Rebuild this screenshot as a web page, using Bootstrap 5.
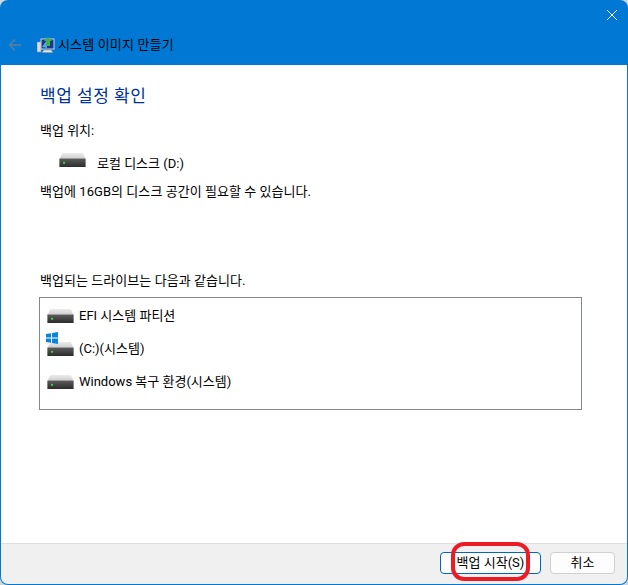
<!DOCTYPE html>
<html lang="ko">
<head>
<meta charset="utf-8">
<title>시스템 이미지 만들기</title>
<link href="https://cdn.jsdelivr.net/npm/bootstrap@5.3.0/dist/css/bootstrap.min.css" rel="stylesheet">
<style>
html,body{margin:0;height:585px;overflow:hidden;background:#cdd6dc}
body{font-family:Roboto,"Noto Sans CJK KR",sans-serif;font-size:13px;line-height:16px;color:#000}
.wiz-window{width:628px;height:585px;background:#0078d4;padding:0 1px 1px 1px;border-radius:8px}
.wiz-top{height:65px;padding-top:38px;padding-left:7px;color:#000}
.wiz-close{top:9px;right:9px}
.wiz-title{font-size:13px;margin-left:3px;letter-spacing:.15px;margin-top:-1px}
.wiz-sysicon{margin-left:15px;margin-top:-1px}
.wiz-main{height:478px;background:#fff;padding:20px 45px 0 39px}
.wiz-heading{font-size:17px;line-height:22px;color:#003399;letter-spacing:.5px;margin:0;font-weight:400}
.wiz-label{margin:16px 0 0 0}
.wiz-dest{margin:13px 0 0 18px;gap:10px}
.wiz-dest span{margin-top:4px}
.wiz-need{margin-top:12px;letter-spacing:.05px}
.wiz-list-title{margin-top:73px;letter-spacing:.05px}
.wiz-box{margin:8px 0 0 -1px;height:113px;border:1px solid #828790;padding:1px 6px;background:#fff}
.wiz-row{height:33px;gap:4px}
.wiz-foot{height:41px;background:#f0f0f0;border-top:1px solid #dfdfdf;padding:8px 12px 0 0;gap:9px;border-radius:0 0 7px 7px}
.wiz-btn{height:22px;padding:0;font-size:13px;line-height:18px;border-radius:4px;background:#fdfdfd;color:#000;border:1px solid #d0d0d0;--bs-btn-hover-bg:#fdfdfd}
.wiz-btn-main{width:101px;border:1px solid #0067c0}
.wiz-btn-sub{width:65px}
.wiz-mark{left:451px;top:542px;width:79px;height:39px;border:4px solid #ed1c24;border-radius:13px;pointer-events:none}
</style>
</head>
<body>
<svg width="0" height="0" class="position-absolute">
<defs>
<linearGradient id="dt" x1="0" y1="0" x2="0" y2="1"><stop offset="0" stop-color="#ececec"/><stop offset="1" stop-color="#c9c9c9"/></linearGradient>
<linearGradient id="df" x1="0" y1="0" x2="0" y2="1"><stop offset="0" stop-color="#5c5c5c"/><stop offset="1" stop-color="#2c2c2c"/></linearGradient>
<symbol id="drive" viewBox="0 0 30 16">
<path d="M4 1h22l3 7H1z" fill="url(#dt)"/>
<rect x="1" y="7" width="28" height="9" fill="url(#df)"/>
<rect x="5" y="10.500" width="2" height="2" fill="#39e23c"/>
</symbol>
</defs>
</svg>
<div class="wiz-window d-flex flex-column position-relative">
<div class="wiz-top d-flex align-items-start position-relative">
<svg class="flex-shrink-0" width="14" height="14" viewBox="0 0 14 14" fill="none" stroke="#5f7f9e" stroke-width="1.300"><path d="M13 7H1.500M7 1.500 1.500 7 7 12.500"/></svg>
<svg class="flex-shrink-0 wiz-sysicon" width="18" height="17" viewBox="0 0 18 17">
<rect x="0" y="5" width="4" height="10" fill="#d9dde0" stroke="#8a9096" stroke-width=".6"/>
<rect x="4" y="2" width="13" height="10" fill="#16398f" stroke="#c9d4dc"/>
<path d="M5 10 10 3v8z" fill="#5ba7e6"/>
<path d="M7 13h7l2 2.500H5z" fill="#dfe3e6" stroke="#8a9096" stroke-width=".5"/>
<path d="M11 0l4 4h-2v5h-4V4H7z" fill="#3fb24a"/>
</svg>
<span class="wiz-title">시스템 이미지 만들기</span>
<svg class="position-absolute wiz-close" width="12" height="12" viewBox="0 0 12 12" stroke="#fff" stroke-width="1"><path d="M1 1l10 10M11 1 1 11"/></svg>
</div>
<div class="wiz-main">
<h1 class="wiz-heading">백업 설정 확인</h1>
<p class="wiz-label">백업 위치:</p>
<div class="wiz-dest d-flex align-items-start">
<svg width="29" height="15"><use href="#drive"/></svg>
<span>로컬 디스크 (D:)</span>
</div>
<p class="wiz-need mb-0">백업에 16GB의 디스크 공간이 필요할 수 있습니다.</p>
<p class="wiz-list-title mb-0">백업되는 드라이브는 다음과 같습니다.</p>
<div class="wiz-box">
<div class="wiz-row d-flex align-items-center">
<svg width="29" height="15"><use href="#drive"/></svg><span>EFI 시스템 파티션</span>
</div>
<div class="wiz-row d-flex align-items-center position-relative">
<svg width="29" height="15"><use href="#drive"/></svg><span>(C:)(시스템)</span>
<svg class="position-absolute top-0 start-0" width="12" height="12" viewBox="0 0 12 12" fill="#0a84d8"><path d="M0 2l5-.8V5.500H0zM6 1.100 12 0v5.500H6zM0 6.500h5v4.300L0 10zM6 6.500h6V12l-6-1z"/></svg>
</div>
<div class="wiz-row d-flex align-items-center">
<svg width="29" height="15"><use href="#drive"/></svg><span>Windows 복구 환경(시스템)</span>
</div>
</div>
</div>
<div class="wiz-foot d-flex justify-content-end align-items-start">
<button type="button" class="btn wiz-btn wiz-btn-main">백업 시작(S)</button>
<button type="button" class="btn wiz-btn wiz-btn-sub">취소</button>
</div>
</div>
<div class="wiz-mark position-absolute"></div>
<script src="https://cdn.jsdelivr.net/npm/bootstrap@5.3.0/dist/js/bootstrap.bundle.min.js"></script>
</body>
</html>
